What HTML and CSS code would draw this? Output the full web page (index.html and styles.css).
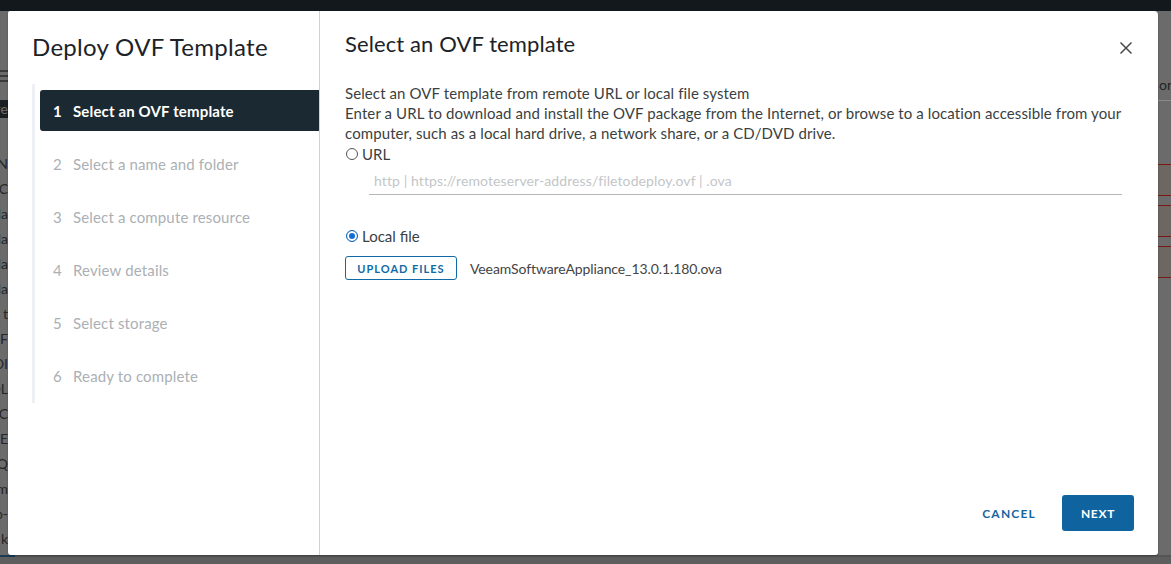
FILE: index.html
```html
<!DOCTYPE html>
<html lang="en">
<head>
<meta charset="utf-8">
<title>Deploy OVF Template</title>
<link rel="stylesheet" href="styles.css">
</head>
<body>
<div class="app">
  <header class="topbar"></header>
  <div class="page">
    <div class="page-left">
      <div class="frag-icon"><span></span><span></span><span></span></div>
      <div class="frag-dark">ve</div>
      <div class="frags">
        <div class="frag">N</div>
        <div class="frag">LC</div>
        <div class="frag">la</div>
        <div class="frag">la</div>
        <div class="frag">la</div>
        <div class="frag">la</div>
        <div class="frag">t</div>
        <div class="frag">DF</div>
        <div class="frag">DI</div>
        <div class="frag">DL</div>
        <div class="frag">C</div>
        <div class="frag">CE</div>
        <div class="frag">Q</div>
        <div class="frag">m</div>
        <div class="frag">-b</div>
        <div class="frag">k</div>
      </div>
    </div>
    <div class="page-main"></div>
    <div class="page-right">
      <div class="pr-head">on</div>
      <div class="pr-rows">
        <div class="pr-row"></div>
        <div class="pr-row"></div>
        <div class="pr-row"></div>
      </div>
    </div>
  </div>
  <div class="statusbar"><span class="status-accent"></span></div>

  <div class="modal" role="dialog" aria-label="Deploy OVF Template">
    <aside class="wizard-nav">
      <h2 class="wizard-title">Deploy OVF Template</h2>
      <ol class="steps">
        <li class="step active"><span class="num">1</span>Select an OVF template</li>
        <li class="step"><span class="num">2</span>Select a name and folder</li>
        <li class="step"><span class="num">3</span>Select a compute resource</li>
        <li class="step"><span class="num">4</span>Review details</li>
        <li class="step"><span class="num">5</span>Select storage</li>
        <li class="step"><span class="num">6</span>Ready to complete</li>
      </ol>
    </aside>
    <section class="wizard-main">
      <div class="main-head">
        <h3 class="page-title">Select an OVF template</h3>
        <button class="close" aria-label="Close">
          <svg width="14" height="14" viewBox="0 0 14 14"><path d="M1.5 1.5 L12.5 12.5 M12.5 1.5 L1.5 12.5" stroke="#4a4a4a" stroke-width="1.5" fill="none"/></svg>
        </button>
      </div>
      <div class="content">
        <p class="desc">Select an OVF template from remote URL or local file system<br>Enter a URL to download and install the OVF package from the Internet, or browse to a location accessible from your computer, such as a local hard drive, a network share, or a CD/DVD drive.</p>
        <label class="radio"><span class="dot"></span>URL</label>
        <div class="url-field"><span class="placeholder">http | https://remoteserver-address/filetodeploy.ovf | .ova</span></div>
        <label class="radio checked"><span class="dot"></span>Local file</label>
        <div class="upload-row">
          <button class="btn-outline">UPLOAD FILES</button>
          <span class="filename">VeeamSoftwareAppliance_13.0.1.180.ova</span>
        </div>
      </div>
      <div class="footer">
        <button class="btn-link">CANCEL</button>
        <button class="btn-primary">NEXT</button>
      </div>
    </section>
  </div>
</div>
</body>
</html>
```
FILE: styles.css
```css
* { box-sizing: border-box; }
html, body { margin: 0; padding: 0; }
body {
  width: 1171px;
  height: 564px;
  overflow: hidden;
  font-family: Lato, "Noto Sans", sans-serif;
  background: #6b6b6b;
}
.app {
  position: relative;
  width: 1171px;
  height: 564px;
  display: flex;
  flex-direction: column;
}
.topbar {
  height: 11px;
  background: #13181c;
  flex: none;
}
.page {
  flex: 1;
  display: flex;
  background: #6b6b6b;
}
.page-left {
  width: 8px;
  overflow: hidden;
  padding-top: 57px;
  display: flex;
  flex-direction: column;
  color: #262626;
  font-size: 14px;
}
.frag-icon {
  height: 16px;
  display: flex;
  flex-direction: column;
  justify-content: space-between;
  padding: 2px 0;
}
.frag-icon span { height: 2px; background: #3a3a3a; }
.frag-dark {
  margin-top: 16px;
  height: 18px;
  line-height: 18px;
  background: #1c1f22;
  color: #6f6f6f;
  direction: rtl;
  white-space: nowrap;
}
.frags { margin-top: 33px; display: flex; flex-direction: column; }
.frag { height: 25px; line-height: 25px; white-space: nowrap; direction: rtl; }
.page-main { flex: 1; }
.page-right {
  width: 13px;
  padding-top: 63px;
  display: flex;
  flex-direction: column;
  overflow: hidden;
}
.pr-head {
  height: 27px;
  font-size: 14px;
  color: #222;
  line-height: 22px;
  padding-left: 1px;
  border-bottom: 1px solid #8a8a8a;
  white-space: nowrap;
}
.pr-rows {
  margin-top: 63px;
  display: flex;
  flex-direction: column;
  gap: 9px;
}
.pr-row {
  height: 32px;
  background: #6d6663;
  border-top: 1px solid #7a1a12;
  border-bottom: 1px solid #7a1a12;
}
.statusbar {
  height: 9px;
  background: #5e5e5e;
  border-top: 2px solid #555;
  flex: none;
  display: flex;
}
.status-accent { width: 15px; height: 2px; margin-top: -2px; background: #1b3a55; }

/* modal */
.modal {
  position: absolute;
  left: 8px;
  top: 11px;
  width: 1150px;
  height: 544px;
  background: #fff;
  border-radius: 2px 4px 3px 3px;
  display: flex;
  box-shadow: 0 1px 2px rgba(0,0,0,0.25);
}
.wizard-nav {
  width: 312px;
  flex: none;
  border-right: 1px solid #cfd3d6;
  padding: 21px 0 0 24px;
}
.wizard-title {
  margin: 0;
  font-weight: 400;
  font-size: 24px;
  line-height: 30px;
  color: #1c2328;
  letter-spacing: 0.3px;
}
.steps {
  list-style: none;
  margin: 22px 0 0 0;
  padding: 6px 0 7px 5px;
  border-left: 3px solid #edf0f5;
  display: flex;
  flex-direction: column;
  gap: 12px;
}
.step {
  height: 41px;
  display: flex;
  align-items: center;
  padding-left: 13px;
  font-size: 15px;
  color: #abb0b4;
  letter-spacing: 0.15px;
  border-radius: 3px 0 0 3px;
}
.step .num { width: 20px; flex: none; }
.step.active {
  background: #1b2a32;
  color: #fff;
  font-weight: 700;
}

.wizard-main {
  flex: 1;
  display: flex;
  flex-direction: column;
  padding: 0 24px 24px 25px;
}
.main-head {
  display: flex;
  align-items: flex-start;
  justify-content: space-between;
  padding-top: 20px;
}
.page-title {
  margin: 0;
  font-weight: 400;
  font-size: 22px;
  line-height: 26px;
  color: #1c2328;
  letter-spacing: 0.1px;
}
.close {
  border: 0;
  background: none;
  padding: 0;
  margin-top: 10px;
  margin-right: 1px;
  width: 14px;
  height: 14px;
  display: flex;
}
.content {
  flex: 1;
  padding-top: 26px;
  color: #3b3f42;
  font-size: 15px;
}
.desc {
  margin: 0;
  line-height: 20px;
  letter-spacing: 0.1px;
}
.radio {
  display: flex;
  align-items: center;
  gap: 4px;
  height: 22px;
  font-size: 15px;
  color: #3b3f42;
}
.dot {
  width: 12px;
  height: 12px;
  border: 1px solid #555;
  border-radius: 50%;
  margin-left: 1px;
  flex: none;
}
.radio.checked .dot {
  border: 1px solid #0a5fae;
  background: #fff;
  box-shadow: inset 0 0 0 2px #fff, inset 0 0 0 6px #0f6fd6;
}
.url-field {
  margin: 2px 12px 0 24px;
  height: 28px;
  border-bottom: 1px solid #b5b8ba;
  display: flex;
  align-items: center;
  padding-left: 5px;
}
.placeholder { color: #c3c6c8; font-size: 14px; letter-spacing: 0.1px; }
.url-field + .radio { margin-top: 30px; }
.upload-row {
  display: flex;
  align-items: center;
  gap: 13px;
  margin-top: 9px;
}
.btn-outline {
  height: 24px;
  width: 112px;
  border: 1px solid #0f6aa5;
  border-radius: 3px;
  background: #fff;
  color: #0f6aa5;
  font-family: inherit;
  font-size: 11px;
  font-weight: 700;
  letter-spacing: 1px;
  padding: 0;
}
.filename { font-size: 14px; color: #444; letter-spacing: -0.1px; }
.footer {
  display: flex;
  justify-content: flex-end;
  align-items: center;
  gap: 26px;
}
.btn-link {
  border: 0;
  background: none;
  color: #17659e;
  font-family: inherit;
  font-size: 12px;
  font-weight: 700;
  letter-spacing: 1.2px;
  padding: 0;
}
.btn-primary {
  width: 72px;
  height: 36px;
  border: 0;
  border-radius: 3px;
  background: #0f64a0;
  color: #fff;
  font-family: inherit;
  font-size: 12px;
  font-weight: 700;
  letter-spacing: 0.7px;
  padding: 0;
}
```
